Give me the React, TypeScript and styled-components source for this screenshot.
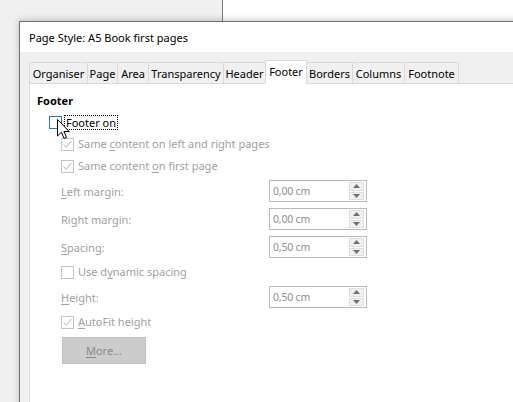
import styled, { createGlobalStyle } from 'styled-components'

const GlobalStyle = createGlobalStyle`
  html, body {
    margin: 0;
    padding: 0;
  }
  body {
    width: 513px;
    height: 402px;
    overflow: hidden;
    font-family: "Noto Sans", "Open Sans", sans-serif;
    font-size: 11px;
    color: #000;
  }
`

const tabs = [
  { label: 'Organiser', width: 59 },
  { label: 'Page', width: 31 },
  { label: 'Area', width: 32 },
  { label: 'Transparency', width: 76 },
  { label: 'Header', width: 43 },
  { label: 'Footer', width: 42, selected: true },
  { label: 'Borders', width: 47 },
  { label: 'Columns', width: 53 },
  { label: 'Footnote', width: 55 },
]

const CheckMark = ({ color }: { color: string }) => (
  <svg width="11" height="11" viewBox="0 0 11 11">
    <polyline points="1.5,5.5 4.2,8.3 9.5,2" fill="none" stroke={color} strokeWidth="1" />
  </svg>
)

const Cursor = () => (
  <svg width="13" height="21" viewBox="0 0 13 21">
    <path
      d="M0.5 0.5 L0.5 17 L4.4 13.3 L7 19.4 L9.5 18.4 L7 12.5 L12.2 12.5 Z"
      fill="#fff"
      stroke="#000"
      strokeWidth="1"
      strokeLinejoin="miter"
    />
  </svg>
)

const SpinArrows = () => (
  <SpinButtons>
    <SpinHalf>
      <svg width="7" height="4" viewBox="0 0 7 4">
        <polygon points="0,4 7,4 3.5,0" fill="#6e6e6e" />
      </svg>
    </SpinHalf>
    <SpinHalf>
      <svg width="7" height="4" viewBox="0 0 7 4">
        <polygon points="0,0 7,0 3.5,4" fill="#6e6e6e" />
      </svg>
    </SpinHalf>
  </SpinButtons>
)

const SpinField = ({ label, value }: { label: React.ReactNode; value: string }) => (
  <SpinRow>
    <FieldLabel>{label}</FieldLabel>
    <SpinBox>
      <SpinValue>{value}</SpinValue>
      <SpinArrows />
    </SpinBox>
  </SpinRow>
)

const DisabledCheck = ({ checked, children }: { checked?: boolean; children: React.ReactNode }) => (
  <CheckRow>
    <Box $disabled>{checked && <CheckMark color="#b4b4b4" />}</Box>
    <CheckLabel $disabled>{children}</CheckLabel>
  </CheckRow>
)

const App = () => {
  return (
    <>
      <GlobalStyle />
      <Desktop>
        <BackPane />
        <BackContent />
        <Dialog>
          <TitleBar>Page Style: A5 Book first pages</TitleBar>
          <Body>
            <TabRow>
              {tabs.map((t) => (
                <Tab key={t.label} $width={t.width} $selected={!!t.selected}>
                  {t.label}
                </Tab>
              ))}
            </TabRow>
            <Panel>
              <SectionTitle>Footer</SectionTitle>
              <Group>
                <CheckRow $gap={2}>
                  <Box $focused />
                  <FocusLabel>Footer on</FocusLabel>
                </CheckRow>
                <Group>
                  <DisabledCheck checked>
                    Same <U>c</U>ontent on left and right pages
                  </DisabledCheck>
                  <DisabledCheck checked>
                    Same content <U>o</U>n first page
                  </DisabledCheck>
                  <SpinField label={<><U>L</U>eft margin:</>} value="0,00 cm" />
                  <SpinField label={<>Ri<U>g</U>ht margin:</>} value="0,00 cm" />
                  <SpinField label={<><U>S</U>pacing:</>} value="0,50 cm" />
                  <DisabledCheck>
                    Use d<U>y</U>namic spacing
                  </DisabledCheck>
                  <SpinField label={<><U>H</U>eight:</>} value="0,50 cm" />
                  <DisabledCheck checked>
                    <U>A</U>utoFit height
                  </DisabledCheck>
                  <MoreButton disabled>
                    <U>M</U>ore...
                  </MoreButton>
                </Group>
              </Group>
            </Panel>
          </Body>
        </Dialog>
        <CursorLayer>
          <Cursor />
        </CursorLayer>
      </Desktop>
    </>
  )
}

const Desktop = styled.div`
  position: relative;
  width: 513px;
  height: 402px;
  overflow: hidden;
  display: flex;
`

const BackPane = styled.div`
  width: 222px;
  background: #f0f0f0;
  border-right: 1px solid #7c7c7c;
`

const BackContent = styled.div`
  flex: 1;
  background: #fff;
`

const Dialog = styled.div`
  position: absolute;
  left: 19px;
  top: 21px;
  width: 540px;
  height: 420px;
  border: 1px solid #727272;
  box-shadow: 0 -1px 7px rgba(0, 0, 0, 0.22);
  background: #f0f0f0;
  display: flex;
  flex-direction: column;
`

const TitleBar = styled.div`
  height: 30px;
  background: #fff;
  display: flex;
  align-items: center;
  padding-left: 9px;
  font-size: 11px;
  color: #000;
`

const Body = styled.div`
  flex: 1;
  display: flex;
  flex-direction: column;
  padding: 8px 0 0 9px;
`

const TabRow = styled.div`
  display: flex;
  align-items: flex-end;
  height: 23px;
`

const Tab = styled.div<{ $width: number; $selected: boolean }>`
  box-sizing: border-box;
  width: ${(p) => p.$width}px;
  height: ${(p) => (p.$selected ? 24 : 21)}px;
  margin-left: -1px;
  margin-bottom: ${(p) => (p.$selected ? -1 : 0)}px;
  border: 1px solid #d9d9d9;
  border-bottom: none;
  background: ${(p) => (p.$selected ? '#fff' : '#f0f0f0')};
  position: relative;
  z-index: ${(p) => (p.$selected ? 1 : 0)};
  display: flex;
  align-items: center;
  justify-content: center;
  padding-bottom: ${(p) => (p.$selected ? 3 : 0)}px;
  white-space: nowrap;

  &:first-child {
    margin-left: 0;
  }
`

const Panel = styled.div`
  flex: 1;
  background: #fff;
  border-top: 1px solid #d9d9d9;
  border-left: 1px solid #d9d9d9;
  padding: 9px 0 0 7px;
  display: flex;
  flex-direction: column;
`

const SectionTitle = styled.div`
  font-weight: bold;
  line-height: 16px;
  margin-bottom: 2px;
`

const Group = styled.div`
  display: flex;
  flex-direction: column;
  align-items: flex-start;
  padding-left: 12px;
`

const CheckRow = styled.div<{ $gap?: number }>`
  height: 22px;
  display: flex;
  align-items: center;
  gap: ${(p) => p.$gap ?? 4}px;
`

const Box = styled.div<{ $focused?: boolean; $disabled?: boolean }>`
  box-sizing: border-box;
  width: 13px;
  height: 13px;
  border: 1px solid ${(p) => (p.$focused ? '#2f74c0' : '#c4c4c4')};
  background: #fff;
  display: flex;
  align-items: center;
  justify-content: center;
`

const CheckLabel = styled.span<{ $disabled?: boolean }>`
  color: ${(p) => (p.$disabled ? '#a0a0a0' : '#000')};
  line-height: 14px;
  white-space: nowrap;
`

const FocusLabel = styled.span`
  border: 1px dotted #000;
  padding: 0 1px;
  line-height: 13px;
  white-space: nowrap;
`

const U = styled.span`
  text-decoration: underline;
  text-underline-offset: 2px;
`

const SpinRow = styled.div`
  display: grid;
  grid-template-columns: 208px 98px;
  align-items: center;
  height: 28px;
`

const FieldLabel = styled.span`
  color: #a0a0a0;
  white-space: nowrap;
`

const SpinBox = styled.div`
  box-sizing: border-box;
  width: 98px;
  height: 22px;
  border: 1px solid #b9b9b9;
  background: #fff;
  display: flex;
  align-items: center;
  padding: 1px;
`

const SpinValue = styled.span`
  flex: 1;
  padding-left: 2px;
  color: #8f8f8f;
  font-size: 10.5px;
  letter-spacing: -0.2px;
`

const SpinButtons = styled.div`
  width: 15px;
  height: 18px;
  display: flex;
  flex-direction: column;
  gap: 1px;
  margin-right: 1px;
`

const SpinHalf = styled.div`
  flex: 1;
  box-sizing: border-box;
  background: #f0f0f0;
  border: 1px solid #dedede;
  display: flex;
  align-items: center;
  justify-content: center;
`

const MoreButton = styled.button`
  box-sizing: border-box;
  margin: 4px 0 0 1px;
  width: 84px;
  height: 27px;
  background: #cccccc;
  border: 1px solid #bfbfbf;
  border-radius: 0;
  color: #8a8a8a;
  font-family: inherit;
  font-size: 11px;
  padding: 0;
`

const CursorLayer = styled.div`
  position: absolute;
  left: 57px;
  top: 119px;
  pointer-events: none;
  line-height: 0;
`

export default App
